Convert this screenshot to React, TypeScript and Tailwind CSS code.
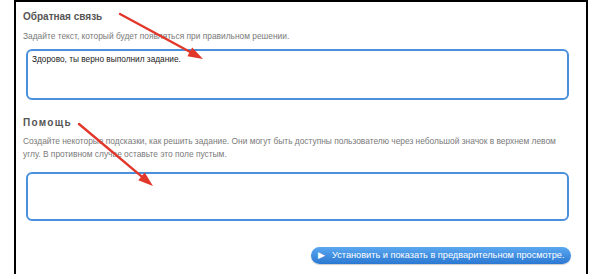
import React from 'react';

const FONT = "font-['Liberation_Sans',Arial,sans-serif]";

function Arrow({ x1, y1, x2, y2 }: { x1: number; y1: number; x2: number; y2: number }) {
    const dx = x2 - x1;
    const dy = y2 - y1;
    const len = Math.hypot(dx, dy);
    const ux = dx / len;
    const uy = dy / len;
    const head = 15;
    const half = 5;
    const bx = x2 - ux * head;
    const by = y2 - uy * head;
    const pts = `${x2},${y2} ${bx - uy * half},${by + ux * half} ${bx + uy * half},${by - ux * half}`;
    return (<g>
      <line x1={x1} y1={y1} x2={bx + ux * 2} y2={by + uy * 2} stroke="#e2372b" strokeWidth={2.4} strokeLinecap="round"/>
      <polygon points={pts} fill="#e2372b"/>
    </g>);
}

export default function App() {
    return (<div className={`relative h-[279px] w-[602px] overflow-hidden bg-white ${FONT}`}>
      <div className="ml-[14px] h-[274px] w-[574px] border-2 border-b-0 border-black pl-[7px] pr-[15px] pt-[9px]">
        {/* Feedback */}
        <h3 className="text-[10px] font-bold leading-[12px] text-[#555]">Обратная связь</h3>
        <p className="mt-[7px] text-[8.4px] leading-[13px] text-[#7a7a7a]">
          Задайте текст, который будет появляться при правильном решении.
        </p>
        <textarea readOnly defaultValue="Здорово, ты верно выполнил задание." className="mt-[6px] ml-[3px] block h-[51px] w-[543px] resize-none rounded-[6px] border-2 border-[#4a90dc] px-[4px] py-[3px] text-[8.3px] leading-[11px] text-[#222] outline-none"/>

        {/* Help */}
        <h3 className="mt-[17px] text-[10px] font-bold leading-[12px] tracking-[1.3px] text-[#555]">Помощь</h3>
        <p className="mt-[6px] w-[540px] text-[8.4px] leading-[13px] text-[#7a7a7a]">
          Создайте некоторые подсказки, как решить задание. Они могут быть доступны пользователю через небольшой значок в верхнем левом углу. В противном случае оставьте это поле пустым.
        </p>
        <textarea readOnly className="mt-[11px] ml-[3px] block h-[49px] w-[543px] resize-none rounded-[6px] border-2 border-[#4a90dc] outline-none"/>

        {/* Submit */}
        <div className="mt-[26px] flex justify-end">
          <button type="button" className="flex h-[17px] w-[260px] items-center gap-[7px] whitespace-nowrap rounded-full bg-gradient-to-b from-[#5aa8f0] to-[#2a78d2] pl-[7px] text-[9.2px] text-white shadow-[0_1px_1px_rgba(0,0,0,0.2)]">
            <span className="text-[9px] leading-none">▶</span>
            <span className="leading-none">Установить и показать в предварительном просмотре.</span>
          </button>
        </div>
      </div>

      {/* Annotation arrows */}
      <svg className="pointer-events-none absolute left-0 top-0" width={602} height={279}>
        <Arrow x1={120} y1={14} x2={203} y2={59}/>
        <Arrow x1={79} y1={124} x2={153} y2={186}/>
      </svg>
    </div>);
}
